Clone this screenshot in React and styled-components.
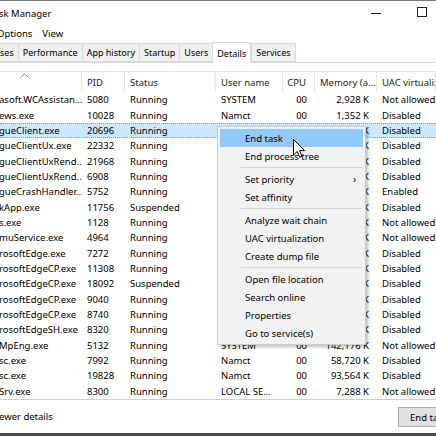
import styled, { createGlobalStyle } from "styled-components";

const GlobalStyle = createGlobalStyle`
  html, body {
    margin: 0;
    padding: 0;
    overflow: hidden;
    background: #fff;
  }
  body {
    font-family: "Noto Sans", "Open Sans", sans-serif;
    font-size: 9.5px;
    color: #000;
  }
`;

const Window = styled.div`
  position: relative;
  width: 436px;
  height: 436px;
  overflow: hidden;
  display: flex;
  flex-direction: column;
  background: #fff;
`;

const TitleBar = styled.div`
  height: 24px;
  border-top: 1px solid #7a7a7a;
  display: flex;
  align-items: center;
`;

const Title = styled.div`
  flex: 1;
  font-size: 9.5px;
  margin-left: -1px;
`;

const Controls = styled.div`
  display: flex;
  margin-right: -9px;
  height: 100%;
`;

const ControlButton = styled.div`
  width: 46px;
  height: 100%;
  display: flex;
  align-items: center;
  justify-content: center;
`;

const MinGlyph = styled.div`
  width: 10px;
  height: 1px;
  background: #222;
  margin-top: 1px;
`;

const MaxGlyph = styled.div`
  width: 8px;
  height: 8px;
  border: 1px solid #222;
  margin-top: -2px;
`;

const MenuBar = styled.div`
  height: 17px;
  display: flex;
  align-items: center;
  gap: 10px;
  margin-left: -3px;
`;

const MenuLabel = styled.span``;

const TabBar = styled.div`
  height: 20px;
  display: flex;
  align-items: flex-end;
  border-bottom: 1px solid #d9d9d9;
  margin-left: -5px;
`;

const Tab = styled.div`
  height: ${(p) => (p.$active ? "20px" : "17px")};
  margin-bottom: ${(p) => (p.$active ? "-1px" : "0")};
  padding: 0 4px;
  display: flex;
  align-items: center;
  background: ${(p) => (p.$active ? "#fff" : "#f0f0f0")};
  border: 1px solid #d9d9d9;
  border-bottom: ${(p) => (p.$active ? "none" : "1px solid #d9d9d9")};
  margin-right: ${(p) => (p.$active ? "0" : "-1px")};
  font-size: 9px;
  white-space: nowrap;
`;

const Spacer = styled.div`
  height: 8px;
`;

const cols = "82px 43px 91px 67px 32px 62px 1fr";

const Header = styled.div`
  position: relative;
  height: 20px;
  display: grid;
  grid-template-columns: ${cols};
  border-top: 1px solid #e8e8e8;
`;

const HeadCell = styled.div`
  display: flex;
  align-items: center;
  justify-content: ${(p) => (p.$right ? "flex-end" : "flex-start")};
  padding: 0 ${(p) => (p.$right ? "8px" : "0")} 0 ${(p) => (p.$right ? "0" : "5px")};
  border-right: 1px solid #e5e5e5;
  white-space: nowrap;
  overflow: hidden;
  color: #1e1e1e;
`;

const SortArrow = styled.svg`
  position: absolute;
  left: 20px;
  top: 1px;
`;

const List = styled.div`
  height: 307px;
  border-bottom: 1px solid #cfcfcf;
  overflow: hidden;
`;

const Row = styled.div`
  height: 15.35px;
  box-sizing: border-box;
  display: grid;
  grid-template-columns: ${cols};
  align-items: center;
  background: ${(p) => (p.$selected ? "#cce8ff" : "transparent")};
  border-top: 1px dotted ${(p) => (p.$selected ? "#7a9cc0" : "transparent")};
  border-bottom: 1px dotted ${(p) => (p.$selected ? "#7a9cc0" : "transparent")};
`;

const Cell = styled.div`
  padding: 0 ${(p) => (p.$right ? "8px" : "0")} 0 ${(p) => (p.$right ? "0" : "5px")};
  text-align: ${(p) => (p.$right ? "right" : "left")};
  white-space: nowrap;
  overflow: hidden;
  line-height: 13px;
`;

const NameCell = styled(Cell)`
  padding-left: 0;
  margin-left: -1px;
`;

const Footer = styled.div`
  flex: 1;
  display: flex;
  align-items: center;
  justify-content: space-between;
`;

const FewerDetails = styled.div`
  margin-left: -1px;
`;

const Button = styled.div`
  width: 75px;
  height: 20px;
  padding-left: 11px;
  margin-right: -37px;
  margin-top: 1px;
  box-sizing: border-box;
  border: 1px solid #adadad;
  background: #e1e1e1;
  display: flex;
  align-items: center;
  white-space: nowrap;
  flex-shrink: 0;
`;

const FrameBottom = styled.div`
  height: 3px;
  background: #4a4a4a;
`;

const ContextMenu = styled.div`
  position: absolute;
  left: 217px;
  top: 126px;
  width: 149px;
  box-sizing: border-box;
  padding: 2px;
  background: #f2f2f2;
  border: 1px solid #cccccc;
  box-shadow: 2px 2px 3px rgba(0, 0, 0, 0.25);
`;

const MenuItem = styled.div`
  position: relative;
  height: 18px;
  display: flex;
  align-items: center;
  padding-left: 25px;
  background: ${(p) => (p.$hover ? "#91c9f7" : "transparent")};
`;

const SubArrow = styled.span`
  position: absolute;
  right: 7px;
  top: 2px;
  font-size: 10px;
`;

const Separator = styled.div`
  height: 1px;
  margin: 2px 1px 2px 21px;
  background: #d4d4d4;
`;

const Cursor = styled.svg`
  position: absolute;
  left: 293px;
  top: 139px;
`;

const tabs = ["ses", "Performance", "App history", "Startup", "Users", "Details", "Services"];

const rows = [
  ["asoft.WCAssistan...", "5080", "Running", "SYSTEM", "00", "2,928 K", "Not allowed"],
  ["ews.exe", "10028", "Running", "Namct", "00", "1,352 K", "Disabled"],
  ["gueClient.exe", "20696", "Running", "Namct", "00", "95,124 K", "Disabled"],
  ["gueClientUx.exe", "22332", "Running", "Namct", "00", "61,420 K", "Disabled"],
  ["gueClientUxRend...", "21968", "Running", "Namct", "00", "21,016 K", "Disabled"],
  ["gueClientUxRend...", "6908", "Running", "Namct", "00", "8,940 K", "Disabled"],
  ["gueCrashHandler...", "5752", "Running", "Namct", "00", "1,208 K", "Enabled"],
  ["kApp.exe", "11756", "Suspended", "Namct", "00", "0 K", "Disabled"],
  ["s.exe", "1128", "Running", "SYSTEM", "00", "1,024 K", "Not allowed"],
  ["muService.exe", "4964", "Running", "SYSTEM", "00", "1,580 K", "Not allowed"],
  ["rosoftEdge.exe", "7272", "Running", "Namct", "00", "9,832 K", "Disabled"],
  ["rosoftEdgeCP.exe", "11308", "Running", "Namct", "00", "12,440 K", "Disabled"],
  ["rosoftEdgeCP.exe", "18092", "Suspended", "Namct", "00", "3,116 K", "Disabled"],
  ["rosoftEdgeCP.exe", "9040", "Running", "Namct", "00", "6,872 K", "Disabled"],
  ["rosoftEdgeCP.exe", "8740", "Running", "Namct", "00", "5,604 K", "Disabled"],
  ["rosoftEdgeSH.exe", "8320", "Running", "Namct", "00", "2,200 K", "Disabled"],
  ["MpEng.exe", "5132", "Running", "SYSTEM", "00", "142,176 K", "Not allowed"],
  ["sc.exe", "7992", "Running", "Namct", "00", "58,720 K", "Disabled"],
  ["sc.exe", "19828", "Running", "Namct", "00", "93,564 K", "Disabled"],
  ["Srv.exe", "8300", "Running", "LOCAL SE...", "00", "7,288 K", "Not allowed"],
];

const menu = [
  ["End task", "End process tree"],
  ["Set priority", "Set affinity"],
  ["Analyze wait chain", "UAC virtualization", "Create dump file"],
  ["Open file location", "Search online", "Properties", "Go to service(s)"],
];

const App = () => {
  return (
    <Window>
      <GlobalStyle />
      <TitleBar>
        <Title>sk Manager</Title>
        <Controls>
          <ControlButton>
            <MinGlyph />
          </ControlButton>
          <ControlButton>
            <MaxGlyph />
          </ControlButton>
        </Controls>
      </TitleBar>
      <MenuBar>
        <MenuLabel>Options</MenuLabel>
        <MenuLabel>View</MenuLabel>
      </MenuBar>
      <TabBar>
        {tabs.map((t) => (
          <Tab key={t} $active={t === "Details"}>
            {t}
          </Tab>
        ))}
      </TabBar>
      <Spacer />
      <Header>
        <SortArrow width="9" height="5" viewBox="0 0 9 5">
          <path d="M0.5 4.5 L4.5 0.8 L8.5 4.5" fill="none" stroke="#8a8a8a" strokeWidth="1" />
        </SortArrow>
        <HeadCell />
        <HeadCell>PID</HeadCell>
        <HeadCell>Status</HeadCell>
        <HeadCell>User name</HeadCell>
        <HeadCell $right>CPU</HeadCell>
        <HeadCell>Memory (a...</HeadCell>
        <HeadCell>UAC virtualization</HeadCell>
      </Header>
      <List>
        {rows.map((r, i) => (
          <Row key={i} $selected={i === 2}>
            <NameCell>{r[0]}</NameCell>
            <Cell>{r[1]}</Cell>
            <Cell>{r[2]}</Cell>
            <Cell>{r[3]}</Cell>
            <Cell $right>{r[4]}</Cell>
            <Cell $right>{r[5]}</Cell>
            <Cell>{r[6]}</Cell>
          </Row>
        ))}
      </List>
      <Footer>
        <FewerDetails>ewer details</FewerDetails>
        <Button>End task</Button>
      </Footer>
      <FrameBottom />

      <ContextMenu>
        {menu.map((group, gi) => (
          <div key={gi}>
            {gi > 0 && <Separator />}
            {group.map((item) => (
              <MenuItem key={item} $hover={item === "End task"}>
                {item}
                {item === "Set priority" && <SubArrow>›</SubArrow>}
              </MenuItem>
            ))}
          </div>
        ))}
      </ContextMenu>
      <Cursor width="13" height="20" viewBox="0 0 13 20">
        <path
          d="M0.5 0.5 L0.5 16 L4.3 12.4 L6.8 18.3 L9 17.4 L6.6 11.6 L11.6 11.6 Z"
          fill="#fff"
          stroke="#000"
          strokeWidth="1"
        />
      </Cursor>
    </Window>
  );
};

export default App;
